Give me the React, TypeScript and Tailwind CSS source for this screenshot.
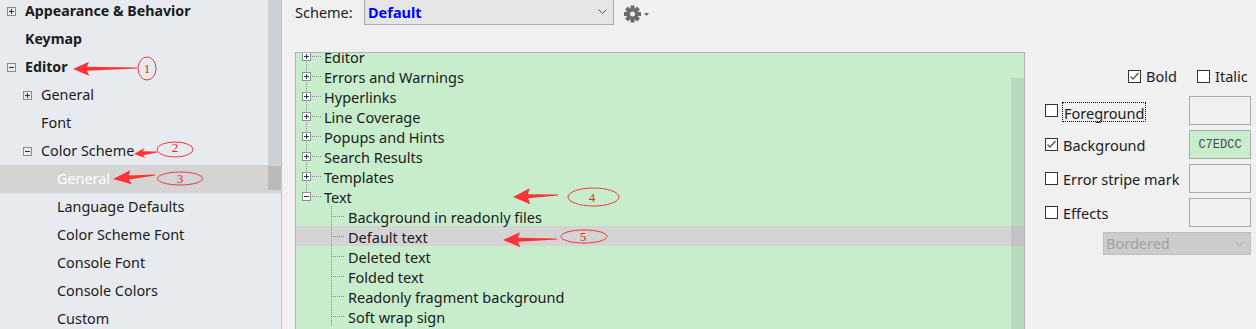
import React from 'react';

type NavItem = { label: string; level: number; bold?: boolean; icon?: 'plus' | 'minus'; selected?: boolean };

const navItems: NavItem[] = [
  { label: 'Appearance & Behavior', level: 0, bold: true, icon: 'plus' },
  { label: 'Keymap', level: 0, bold: true },
  { label: 'Editor', level: 0, bold: true, icon: 'minus' },
  { label: 'General', level: 1, icon: 'plus' },
  { label: 'Font', level: 1 },
  { label: 'Color Scheme', level: 1, icon: 'minus' },
  { label: 'General', level: 2, selected: true },
  { label: 'Language Defaults', level: 2 },
  { label: 'Color Scheme Font', level: 2 },
  { label: 'Console Font', level: 2 },
  { label: 'Console Colors', level: 2 },
  { label: 'Custom', level: 2 },
];

type TreeItem = { label: string; child?: boolean; icon?: 'plus' | 'minus'; last?: boolean; selected?: boolean };

const treeItems: TreeItem[] = [
  { label: 'Editor', icon: 'plus' },
  { label: 'Errors and Warnings', icon: 'plus' },
  { label: 'Hyperlinks', icon: 'plus' },
  { label: 'Line Coverage', icon: 'plus' },
  { label: 'Popups and Hints', icon: 'plus' },
  { label: 'Search Results', icon: 'plus' },
  { label: 'Templates', icon: 'plus' },
  { label: 'Text', icon: 'minus', last: true },
  { label: 'Background in readonly files', child: true },
  { label: 'Default text', child: true, selected: true },
  { label: 'Deleted text', child: true },
  { label: 'Folded text', child: true },
  { label: 'Readonly fragment background', child: true },
  { label: 'Soft wrap sign', child: true },
];

function ExpandBox({ open, x, y }: { open: boolean; x: number; y: number }) {
  return (
    <g>
      <rect x={x + 0.5} y={y + 0.5} width={8} height={8} fill="#fdfdfd" stroke="#8e8f8f" />
      <line x1={x + 2} y1={y + 4.5} x2={x + 7} y2={y + 4.5} stroke="#1e3966" />
      {!open && <line x1={x + 4.5} y1={y + 2} x2={x + 4.5} y2={y + 7} stroke="#1e3966" />}
    </g>
  );
}

function NavIcon({ open }: { open: boolean }) {
  return (
    <svg width="9" height="9" viewBox="0 0 9 9">
      <rect x="0.5" y="0.5" width="8" height="8" fill="none" stroke="#8c8c8c" />
      <line x1="2" y1="4.5" x2="7" y2="4.5" stroke="#333" />
      {!open && <line x1="4.5" y1="2" x2="4.5" y2="7" stroke="#333" />}
    </svg>
  );
}

function TreeLines({ item }: { item: TreeItem }) {
  const dot = { stroke: '#8a8a8a', strokeDasharray: '1 1' };
  if (item.child) {
    return (
      <svg width="52" height="20" className="flex-none">
        <line x1="35.5" y1="0" x2="35.5" y2="20" {...dot} />
        <line x1="37" y1="10.5" x2="49" y2="10.5" {...dot} />
      </svg>
    );
  }
  return (
    <svg width="28" height="20" className="flex-none">
      <line x1="10.5" y1="0" x2="10.5" y2={item.last ? 6 : 20} {...dot} />
      <line x1="16" y1="10.5" x2="25" y2="10.5" {...dot} />
      <ExpandBox open={item.icon === 'minus'} x={6} y={6} />
    </svg>
  );
}

function CheckBox({ checked }: { checked?: boolean }) {
  return (
    <span className="flex-none w-[13px] h-[13px] border border-[#333] bg-white flex items-center justify-center">
      {checked && (
        <svg width="11" height="11" viewBox="0 0 11 11">
          <path d="M1.5 5.5 L4 8 L9.5 2" fill="none" stroke="#555" strokeWidth="1.3" />
        </svg>
      )}
    </span>
  );
}

function ColorBox({ value }: { value?: string }) {
  return (
    <div
      className={
        'w-[62px] h-[29px] border border-[#ababab] flex items-center justify-center text-[12px] text-[#4a4a4a] font-["Liberation_Mono",monospace] ' +
        (value ? 'bg-[#c7edcc]' : 'bg-[#f0f0f0]')
      }
    >
      {value}
    </div>
  );
}

function Gear() {
  const teeth = [0, 45, 90, 135];
  return (
    <svg width="27" height="18" viewBox="0 0 27 18">
      <g transform="translate(8.5 9)" fill="#6b6b6b">
        {teeth.map((a) => (
          <rect key={a} x="-2" y="-8.5" width="4" height="17" transform={`rotate(${a})`} />
        ))}
        <circle r="6" />
        <circle r="2.5" fill="#f0f0f0" />
      </g>
      <path d="M20 8 L25 8 L22.5 11 Z" fill="#6b6b6b" />
    </svg>
  );
}

function arrowPoints(tip: [number, number], tail: [number, number], headLen: number, headW: number) {
  const dx = tail[0] - tip[0];
  const dy = tail[1] - tip[1];
  const len = Math.hypot(dx, dy);
  const ux = dx / len;
  const uy = dy / len;
  const nx = -uy;
  const ny = ux;
  const bx = tip[0] + ux * headLen;
  const by = tip[1] + uy * headLen;
  const pts = [
    [tip[0], tip[1]],
    [bx + nx * headW, by + ny * headW],
    [bx - ux * 2 + nx * 2, by - uy * 2 + ny * 2],
    [tail[0] + nx * 0.6, tail[1] + ny * 0.6],
    [tail[0] - nx * 0.6, tail[1] - ny * 0.6],
    [bx - ux * 2 - nx * 2, by - uy * 2 - ny * 2],
    [bx - nx * headW, by - ny * headW],
  ];
  return pts.map((p) => p.join(',')).join(' ');
}

const marks = [
  { tip: [73, 69], tail: [137, 68], head: 16, w: 7, cx: 147, cy: 68.5, rx: 9, ry: 11.5, n: '1', tx: 147, ty: 73 },
  { tip: [134, 154], tail: [157, 152], head: 11, w: 5, cx: 175, cy: 149.5, rx: 18, ry: 7.5, n: '2', tx: 175, ty: 152 },
  { tip: [113, 179], tail: [155, 175], head: 18, w: 7, cx: 180, cy: 178.5, rx: 22.5, ry: 6.5, n: '3', tx: 180, ty: 183 },
  { tip: [513, 197], tail: [558, 195], head: 17, w: 8, cx: 593.5, cy: 197, rx: 25.5, ry: 9, n: '4', tx: 592, ty: 202 },
  { tip: [503, 240], tail: [557, 239], head: 17, w: 7.5, cx: 584, cy: 236.5, rx: 23, ry: 6.5, n: '5', tx: 583, ty: 241 },
] as const;

export default function App() {
  return (
    <div className="relative w-[1256px] h-[329px] overflow-hidden flex bg-[#f0f0f0] font-['Noto_Sans',sans-serif] text-[#1b1b1b]">
      {/* settings nav */}
      <div className="flex-none w-[268px] bg-[#e7ebef] overflow-hidden">
        <div className="mt-[-3px]">
          {navItems.map((it, i) => (
            <div
              key={i}
              className={'h-[28px] flex items-center w-[281px] ' + (it.selected ? 'bg-[#d4d4d4] text-white' : '')}
            >
              <div className="flex-none flex items-center" style={{ width: 25 + it.level * 16, paddingLeft: 7 + it.level * 16 }}>
                {it.icon && <NavIcon open={it.icon === 'minus'} />}
              </div>
              <span className={'whitespace-nowrap ' + (it.bold ? 'font-bold text-[14.2px]' : 'text-[14.4px]')}>
                {it.label}
              </span>
            </div>
          ))}
        </div>
      </div>
      <div className="flex-none w-[13px] flex flex-col">
        <div className="h-[166px] bg-[#ccd1d5]" />
        <div className="h-[24px] bg-[#bababa]" />
        <div className="h-[3px] bg-[#d4d4d4]" />
        <div className="flex-1 bg-[#e7ebef]" />
      </div>

      {/* main area */}
      <div className="flex-1 border-l border-[#c4c4c4] pl-[13px] flex flex-col">
        <div className="mt-[-1px] h-[26px] flex items-center">
          <span className="w-[69px] text-[14.5px] translate-y-px">Scheme:</span>
          <div className="w-[250px] h-[26px] border border-[#acacac] bg-[#e5e5e5] flex items-center pl-[3px] pr-[6px]">
            <span className="flex-1 text-[14.5px] font-bold text-[#0000ff] translate-y-px">Default</span>
            <svg width="9" height="6" viewBox="0 0 9 6">
              <path d="M0.5 0.5 L4.5 4.5 L8.5 0.5" fill="none" stroke="#555" />
            </svg>
          </div>
          <div className="ml-[10px] mt-[4px] flex items-center">
            <Gear />
          </div>
        </div>
        <div className="mt-[16px] h-px bg-[#a0a0a0]" />

        <div className="mt-[11px] flex">
          {/* tree */}
          <div className="relative flex-none w-[730px] h-[290px] border border-[#b4b4b4] bg-[#c7edcc] overflow-hidden">
            <div className="mt-[-7px]">
              {treeItems.map((t, i) => (
                <div key={i} className={'h-[20px] flex items-center ' + (t.selected ? 'bg-[#d4d4d4]' : '')}>
                  <TreeLines item={t} />
                  <span className="text-[14.5px] whitespace-nowrap translate-y-[2px]">{t.label}</span>
                </div>
              ))}
            </div>
            <div className="absolute right-0 top-[25px] bottom-0 w-[13px] bg-[#00000014]" />
          </div>

          {/* attributes */}
          <div className="flex-1 pl-[20px] pr-[5px] flex flex-col text-[14.5px]">
            <div className="mt-[14px] h-[20px] flex items-center pl-[83px]">
              <span className="w-[69px] flex items-center gap-[5px]">
                <CheckBox checked />
                <span className="translate-y-px">Bold</span>
              </span>
              <span className="flex items-center gap-[5px]">
                <CheckBox />
                <span className="translate-y-px">Italic</span>
              </span>
            </div>
            <div className="mt-[10px] flex flex-col gap-[5px]">
              <div className="h-[29px] flex items-center justify-between">
                <span className="flex items-center">
                  <CheckBox />
                  <span className="ml-[4px] px-[1px] border border-dotted border-black h-[20px] leading-[20px] translate-y-px">
                    Foreground
                  </span>
                </span>
                <ColorBox />
              </div>
              <div className="h-[29px] flex items-center justify-between">
                <span className="flex items-center gap-[5px]">
                  <CheckBox checked />
                  <span className="translate-y-px">Background</span>
                </span>
                <ColorBox value="C7EDCC" />
              </div>
              <div className="h-[29px] flex items-center justify-between">
                <span className="flex items-center gap-[5px]">
                  <CheckBox />
                  <span className="translate-y-px">Error stripe mark</span>
                </span>
                <ColorBox />
              </div>
              <div className="h-[29px] flex items-center justify-between">
                <span className="flex items-center gap-[5px]">
                  <CheckBox />
                  <span className="translate-y-px">Effects</span>
                </span>
                <ColorBox />
              </div>
            </div>
            <div className="mt-[5px] ml-auto w-[148px] h-[23px] border border-[#bfbfbf] bg-[#cccccc] flex items-center pl-[2px] pr-[6px]">
              <span className="flex-1 text-[#a2a2a2]">Bordered</span>
              <svg width="9" height="6" viewBox="0 0 9 6">
                <path d="M0.5 0.5 L4.5 4.5 L8.5 0.5" fill="none" stroke="#a8a8a8" />
              </svg>
            </div>
          </div>
        </div>
      </div>

      {/* red annotations */}
      <svg className="absolute inset-0 pointer-events-none" width="1256" height="329">
        {marks.map((m) => (
          <g key={m.n}>
            <polygon points={arrowPoints(m.tip as [number, number], m.tail as [number, number], m.head, m.w)} fill="#f33" />
            <ellipse cx={m.cx} cy={m.cy} rx={m.rx} ry={m.ry} fill="none" stroke="#ee3a3a" strokeWidth="1" />
            <text x={m.tx} y={m.ty} fill="#e62828" fontSize="13" textAnchor="middle" fontFamily="Liberation Serif, serif">
              {m.n}
            </text>
          </g>
        ))}
      </svg>
    </div>
  );
}
